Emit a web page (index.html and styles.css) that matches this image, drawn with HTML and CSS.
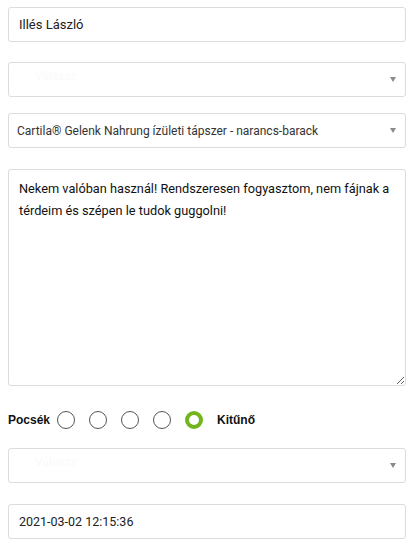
FILE: index.html
```html
<!DOCTYPE html>
<html lang="hu">
<head>
<meta charset="utf-8">
<title>Vélemény</title>
<link rel="stylesheet" href="styles.css">
</head>
<body>
<form class="form">
  <input class="field field-name" type="text" value="Illés László">
  <div class="select-wrap sw-1">
    <select class="field select faint"><option>Válassz</option></select>
  </div>
  <div class="select-wrap sw-2">
    <select class="field select"><option>Cartila® Gelenk Nahrung ízületi tápszer - narancs-barack</option></select>
  </div>
  <textarea class="field area">Nekem valóban használ! Rendszeresen fogyasztom, nem fájnak a térdeim és szépen le tudok guggolni!</textarea>
  <div class="rating">
    <span class="rate-label">Pocsék</span>
    <span class="radio"></span>
    <span class="radio"></span>
    <span class="radio"></span>
    <span class="radio"></span>
    <span class="radio checked"></span>
    <span class="rate-label rate-right">Kitűnő</span>
  </div>
  <div class="select-wrap sw-3">
    <select class="field select faint"><option>Válassz</option></select>
  </div>
  <input class="field field-date" type="text" value="2021-03-02 12:15:36">
</form>
</body>
</html>
```

FILE: styles.css
```css
* { box-sizing: border-box; }
html, body { margin: 0; padding: 0; background: #fff; }
body { font-family: Roboto, "Noto Sans", sans-serif; color: #222; }
.form {
  display: flex;
  flex-direction: column;
  padding: 7px 8px 0 8px;
}
.field {
  display: block;
  width: 100%;
  height: 35px;
  margin: 0;
  border: 1px solid #dcdcdc;
  border-radius: 3px;
  background: #fff;
  font-family: Roboto, "Noto Sans", sans-serif;
  font-size: 13px;
  color: #222;
  padding: 0 10px;
  outline: none;
}
.field-name { margin-bottom: 20px; }
.field-date { font-size: 12.5px; }
.select-wrap { position: relative; }
.select-wrap::after {
  content: "";
  position: absolute;
  right: 10px;
  top: 15px;
  border-left: 3.5px solid transparent;
  border-right: 3.5px solid transparent;
  border-top: 5px solid #8a8a8a;
  pointer-events: none;
}
.select {
  -webkit-appearance: none;
  appearance: none;
  padding: 0 24px 0 8px;
  font-size: 12px;
  color: #333;
}
.faint { color: #fafafa; padding-left: 26px; padding-bottom: 8px; }
.sw-1 { margin-bottom: 16px; }
.sw-2 { margin-bottom: 21px; }
.area {
  height: 217px;
  padding: 8px 10px;
  font-size: 12.75px;
  line-height: 22px;
  resize: vertical;
  color: #111;
}
.rating {
  display: flex;
  align-items: center;
  height: 24px;
  margin: 22px 0 16px 0;
}
.rate-label {
  font-family: "Liberation Sans", Arial, sans-serif;
  font-weight: bold;
  font-size: 12px;
  color: #111;
  margin-right: 7px;
}
.rate-right { margin-left: 14px; margin-right: 0; }
.radio {
  width: 18px;
  height: 18px;
  border: 1px solid #555;
  border-radius: 50%;
  margin-right: 14px;
  flex: none;
}
.radio.checked {
  border: 4.5px solid #72b51e;
  margin-right: 0;
}
.sw-3 { margin-bottom: 21px; }
```
